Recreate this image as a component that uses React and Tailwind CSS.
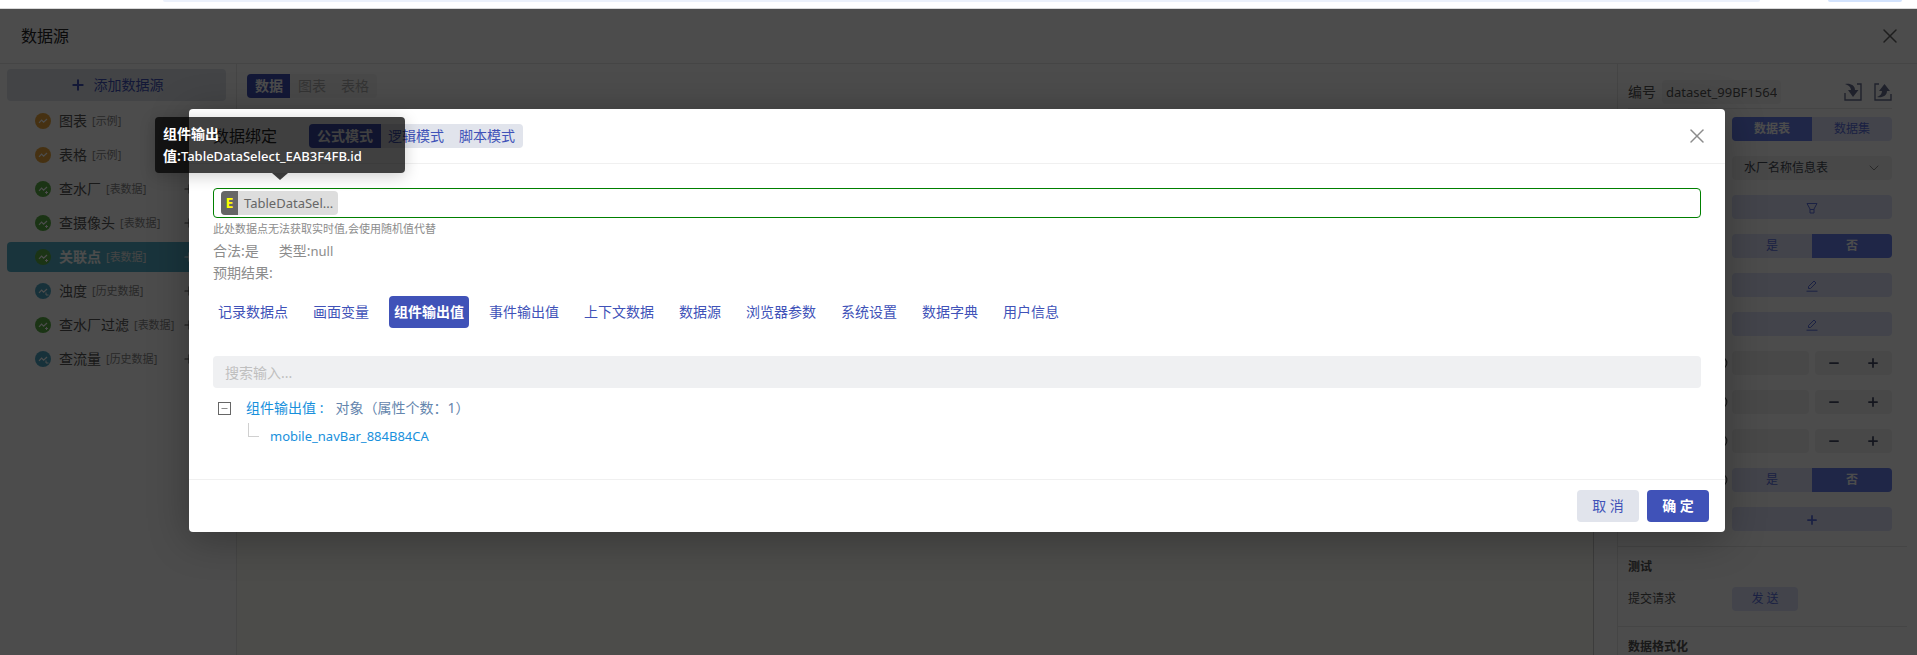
import { useState } from 'react';
import { X, Plus, Minus, ChevronDown, CircleHelp } from 'lucide-react';

const SOURCES = [
  { name: '图表', tag: '示例', kind: 'demo' },
  { name: '表格', tag: '示例', kind: 'demo' },
  { name: '查水厂', tag: '表数据', kind: 'table' },
  { name: '查摄像头', tag: '表数据', kind: 'table' },
  { name: '关联点', tag: '表数据', kind: 'table', active: true },
  { name: '浊度', tag: '历史数据', kind: 'history' },
  { name: '查水厂过滤', tag: '表数据', kind: 'table' },
  { name: '查流量', tag: '历史数据', kind: 'history' },
];

const KIND_COLORS = {
  demo: 'text-[#eaa63c]',
  table: 'text-[#5aae46]',
  history: 'text-[#4fa6c4]',
};

const BINDING_TABS = [
  '记录数据点',
  '画面变量',
  '组件输出值',
  '事件输出值',
  '上下文数据',
  '数据源',
  '浏览器参数',
  '系统设置',
  '数据字典',
  '用户信息',
];

const MODES = ['公式模式', '逻辑模式', '脚本模式'];

const SourceIcon = ({ kind }) => (
  <svg viewBox="0 0 16 16" className={`size-4 shrink-0 ${KIND_COLORS[kind]}`} aria-hidden="true">
    <circle cx="8" cy="8" r="8" fill="currentColor" />
    <path d="M4 9.800 6.600 7.200l2 2L12 6" fill="none" stroke="#fff" strokeWidth="1.2" />
    {kind === 'table' && (
      <path d="M11.500 10v3M10 11.500h3" fill="none" stroke="#fff" strokeWidth="1" />
    )}
    {kind === 'history' && (
      <path d="M11 9.500V12h2.500" fill="none" stroke="#fff" strokeWidth="1" />
    )}
  </svg>
);

const ImportIcon = () => (
  <svg viewBox="0 0 18 18" className="size-[18px]" aria-hidden="true">
    <path d="M1 10v7h16V1h-4" fill="none" stroke="currentColor" strokeWidth="1.4" />
    <path d="M1 1c5-1 10 1 10 6h3.500l-5.500 7-5-7H7C7 4 4 2 1 1z" fill="currentColor" />
  </svg>
);

const ExportIcon = () => (
  <svg viewBox="0 0 18 18" className="size-[18px]" aria-hidden="true">
    <path d="M5 1H1v16h16v-6" fill="none" stroke="currentColor" strokeWidth="1.4" />
    <path d="M3 14c5 1 10-1 10-6h3l-5.500-7-5.500 7H8c0 3-2 5-5 6z" fill="currentColor" />
  </svg>
);

const FilterIcon = () => (
  <svg viewBox="0 0 12 12" className="size-3" fill="none" stroke="currentColor" aria-hidden="true">
    <path d="M1 1.500h10L8 7v4H4V7zM4 7.500h4" />
  </svg>
);

const EditIcon = () => (
  <svg viewBox="0 0 12 12" className="size-3" fill="none" stroke="currentColor" aria-hidden="true">
    <path d="M2.500 8.500V6.500L8 1l2 2-5.500 5.500z" />
    <path d="M0.500 11.200h11" />
  </svg>
);

const YesNo = ({ label }) => (
  <div role="group" aria-label={label} className="flex h-6 w-40 shrink-0 overflow-hidden rounded text-xs">
    <button className="flex-1 bg-[#e0e4fa] text-[#5a6ee0]">是</button>
    <button className="flex-1 bg-[#6880ee] font-bold text-white">否</button>
  </div>
);

const Stepper = () => (
  <div className="grid w-40 shrink-0 grid-cols-2 gap-1.5">
    <input aria-label="数值" className="h-6 w-full min-w-0 rounded bg-[#f0f0f0] px-2 text-xs" />
    <div className="grid h-6 grid-cols-2 rounded bg-[#f0f0f0] text-[#444a66]">
      <button aria-label="减少" className="flex items-center justify-center"><Minus size={14} strokeWidth={3} /></button>
      <button aria-label="增加" className="flex items-center justify-center"><Plus size={14} strokeWidth={3} /></button>
    </div>
  </div>
);

const WideButton = ({ label, children }) => (
  <button
    aria-label={label}
    className="flex h-6 w-40 shrink-0 items-center justify-center rounded bg-[#e0e4fa] pt-0.5 text-[#5a6ee0]"
  >
    {children}
  </button>
);

const FormRow = ({ help, children }) => (
  <div className="flex h-6 items-center justify-end gap-1">
    {help && <CircleHelp size={14} className="text-[#555]" />}
    {children}
  </div>
);

const SourceList = () => (
  <aside className="w-[237px] shrink-0 border-r border-[#e8e8e8] pt-[5px] pr-2.5 pl-[7px]">
    <button className="flex h-8 w-full items-center justify-center gap-2 rounded bg-[#e1e4ec] text-sm text-[#4052b8]">
      <Plus size={16} strokeWidth={3} />
      添加数据源
    </button>
    <ul className="mt-[5px] flex flex-col gap-1">
      {SOURCES.map((s) => (
        <li
          key={s.name}
          className={`flex h-[30px] items-center rounded pr-[30px] pl-7 ${s.active ? 'bg-[#56b0c8] text-white' : 'text-[#555]'}`}
        >
          <SourceIcon kind={s.kind} />
          <span className={`ml-2 text-sm whitespace-nowrap ${s.active ? 'font-bold' : ''}`}>{s.name}</span>
          <span className={`ml-[5px] text-[11px] whitespace-nowrap ${s.active ? 'text-[#e6e6e6]' : 'text-[#888]'}`}>
            [{s.tag}]
          </span>
          {s.kind !== 'demo' && <Plus size={14} className="ml-auto shrink-0" />}
        </li>
      ))}
    </ul>
  </aside>
);

const Preview = () => (
  <main className="flex min-w-0 flex-1 flex-col">
    <div className="flex shrink-0 px-2.5 pt-2.5 text-sm">
      <button className="h-6 rounded-l bg-[#4052b8] px-2 font-bold text-white">数据</button>
      <button className="-ml-px h-6 bg-[#f5f5f5] px-2 text-[#b0b0b0]">图表</button>
      <button className="-ml-px h-6 rounded-r bg-[#f5f5f5] px-2 text-[#b0b0b0]">表格</button>
    </div>
    <div className="mt-16 mr-[23px] flex-1 border-r border-[#c8c8c8] bg-[#fdfdf8]" />
  </main>
);

const Settings = () => (
  <section className="w-[300px] shrink-0 border-l border-[#e8e8e8] text-xs text-[#555]">
    <div className="mr-[25px] ml-2.5 flex h-[45px] items-center border-b border-[#e8e8e8] pt-3 text-sm">
      <label htmlFor="dataset-id">编号</label>
      <input
        id="dataset-id"
        defaultValue="dataset_99BF1564"
        className="ml-1.5 h-6 w-[119px] rounded bg-[#f5f5f5] px-1 text-[13px] text-[#555]"
      />
      <div className="ml-auto flex gap-3 text-[#6a7192]">
        <button aria-label="导入"><ImportIcon /></button>
        <button aria-label="导出"><ExportIcon /></button>
      </div>
    </div>
    <div className="mr-2.5 border-b border-[#e8e8e8] pt-2 pr-[15px] pb-[15px]">
      <div className="flex flex-col gap-[15px]">
        <FormRow>
          <div className="flex h-6 w-40 overflow-hidden rounded">
            <button className="flex-1 bg-[#6880ee] font-bold text-white">数据表</button>
            <button className="flex-1 bg-[#e0e4fa] text-[#5a6ee0]">数据集</button>
          </div>
        </FormRow>
        <FormRow>
          <div className="relative flex h-6 w-40 items-center">
            <select aria-label="数据表名称" className="h-6 w-full appearance-none rounded bg-[#f0f0f0] pl-3 text-xs text-[#444a55]">
              <option>水厂名称信息表</option>
            </select>
            <ChevronDown size={16} strokeWidth={1} className="pointer-events-none absolute right-2.5" />
          </div>
        </FormRow>
        <FormRow>
          <WideButton label="筛选"><FilterIcon /></WideButton>
        </FormRow>
        <FormRow>
          <YesNo label="启用" />
        </FormRow>
        <FormRow>
          <WideButton label="编辑"><EditIcon /></WideButton>
        </FormRow>
        <FormRow>
          <WideButton label="编辑"><EditIcon /></WideButton>
        </FormRow>
        <FormRow help><Stepper /></FormRow>
        <FormRow help><Stepper /></FormRow>
        <FormRow help><Stepper /></FormRow>
        <FormRow help>
          <YesNo label="开关" />
        </FormRow>
        <FormRow>
          <WideButton label="添加"><Plus size={14} strokeWidth={3} /></WideButton>
        </FormRow>
      </div>
    </div>
    <div className="mr-2.5 border-b border-[#e8e8e8] pt-3 pb-[15px] pl-2.5">
      <h3 className="leading-4 font-bold">测试</h3>
      <div className="mt-3 flex items-center">
        <span className="w-[104px]">提交请求</span>
        <button className="h-6 w-[66px] rounded bg-[#e0e4fa] text-[#5a6ee0]">发 送</button>
      </div>
    </div>
    <h3 className="pt-3 pl-2.5 font-bold">数据格式化</h3>
  </section>
);

const FieldTooltip = () => (
  <div
    role="tooltip"
    className="absolute bottom-full -left-[66px] z-10 mb-[18px] w-[250px] rounded bg-black/75 px-2 py-1.5 text-sm leading-[22px] font-semibold text-white shadow-[0_3px_16px_rgba(0,0,0,0.2)]"
  >
    组件输出值:<span className="text-[13px] font-medium">TableDataSelect_EAB3F4FB.id</span>
    <svg viewBox="0 0 16 7" className="absolute top-full left-[117px] h-[7px] w-4 text-black/75" aria-hidden="true">
      <path d="M0 0h16L8 7z" fill="currentColor" />
    </svg>
  </div>
);

const BindingModal = () => {
  const [mode, setMode] = useState('公式模式');
  const [tab, setTab] = useState('组件输出值');

  return (
    <div
      role="dialog"
      aria-label="数据绑定"
      className="w-full max-w-[1536px] rounded bg-white text-sm shadow-[0_6px_40px_rgba(0,0,0,0.3)]"
    >
      <header className="flex h-[55px] items-center border-b border-[#f0f0f0] px-6">
        <h2 className="text-base text-[#262626]">数据绑定</h2>
        <div className="ml-8 flex overflow-hidden rounded bg-[#e1e4ec]">
          {MODES.map((m) => (
            <button
              key={m}
              onClick={() => setMode(m)}
              className={`-mr-px h-6 px-2 last:mr-0 ${m === mode ? 'bg-[#4052b8] font-bold text-white' : 'text-[#4052b8]'}`}
            >
              {m}
            </button>
          ))}
        </div>
        <button aria-label="关闭" className="-mr-2 ml-auto text-[#8c8c8c]">
          <X size={24} strokeWidth={1.5} />
        </button>
      </header>

      <div className="px-6 pt-6 pb-[29px]">
        <div className="flex h-[30px] items-center rounded-sm border border-[#008000] px-[7px]">
          <div className="relative flex h-6 items-center rounded-sm bg-[#ddd] text-[#666]">
            <span className="flex h-6 w-[17px] items-center justify-center rounded-l-sm bg-[#666] text-sm font-bold text-[#ff0]">
              E
            </span>
            <span className="pr-[5px] pl-1.5 text-[13px]">TableDataSel...</span>
            <FieldTooltip />
          </div>
        </div>
        <div className="leading-[22px] text-[#8c8c8c]">
          <p className="text-[11px] leading-[22px]">此处数据点无法获取实时值,会使用随机值代替</p>
          <p className="flex gap-5">
            <span>合法:是</span>
            <span>类型:<span className="text-[13px]">null</span></span>
          </p>
          <p>预期结果:</p>
        </div>

        <div className="mt-3 flex flex-wrap gap-[15px]">
          {BINDING_TABS.map((t) => (
            <button
              key={t}
              onClick={() => setTab(t)}
              className={`h-8 rounded px-[5px] ${t === tab ? 'bg-[#4052b8] font-bold text-white' : 'text-[#4052b8]'}`}
            >
              {t}
            </button>
          ))}
        </div>

        <input
          aria-label="搜索"
          placeholder="搜索输入..."
          className="mt-7 block h-8 w-full rounded bg-[#eff0f2] px-3 placeholder:text-[#bfbfbf]"
        />

        <div className="mt-1.5 pl-[5px] text-[#1890dc]">
          <div className="flex h-7 items-center">
            <button
              aria-label="收起"
              className="flex size-[13px] items-center justify-center border border-[#666] text-[#666]"
            >
              <Minus size={9} />
            </button>
            <span className="ml-[15px]">组件输出值 :</span>
            <span className="ml-3 text-[#6485ad]">对象（属性个数：1）</span>
          </div>
          <div className="flex h-7 items-center pl-[30px]">
            <span className="mb-3 h-3.5 w-[11px] border-b border-l border-[#d0d0d0]" />
            <span className="ml-[11px] text-[13px]">mobile_navBar_884B84CA</span>
          </div>
        </div>
      </div>

      <footer className="flex justify-end gap-2 border-t border-[#f0f0f0] px-4 py-2.5">
        <button className="h-8 w-[62px] rounded bg-[#e1e4ec] text-[#4052b8]">取 消</button>
        <button className="h-8 w-[62px] rounded bg-[#4052b8] font-bold text-white">确 定</button>
      </footer>
    </div>
  );
};

export default function App() {
  return (
    <div className="flex h-screen flex-col overflow-hidden bg-white font-['Noto_Sans','Noto_Sans_CJK_SC',sans-serif]">
      <div className="flex h-[9px] shrink-0 items-start border-b border-[#d8d8d8] pr-[15px] pl-[163px]">
        <div className="h-0.5 flex-1 rounded-b bg-[#ecf1fb]" />
        <div className="ml-17 h-0.5 w-[74px] rounded-b bg-[#d3e3fd]" />
      </div>
      <div className="relative flex min-h-0 flex-1 flex-col">
        <header className="flex h-[55px] shrink-0 items-center border-b border-[#e8e8e8] pr-[15px] pl-[21px]">
          <h1 className="text-base text-[#262626]">数据源</h1>
          <button aria-label="关闭" className="ml-auto text-[#666]">
            <X size={24} strokeWidth={1.5} />
          </button>
        </header>
        <div className="flex min-h-0 flex-1 overflow-hidden">
          <SourceList />
          <Preview />
          <Settings />
        </div>
        <div className="absolute inset-0 flex items-start justify-center bg-black/70 pt-[100px] pr-[3px]">
          <BindingModal />
        </div>
      </div>
    </div>
  );
}
